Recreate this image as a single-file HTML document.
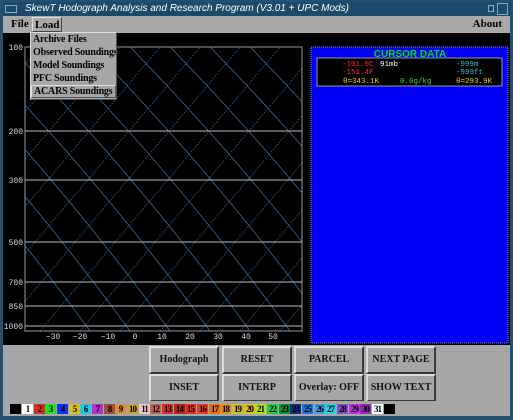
<!DOCTYPE html>
<html><head><style>
*{margin:0;padding:0;box-sizing:border-box}
body{width:513px;height:420px;background:#23506e;position:relative;overflow:hidden;font-family:"Liberation Serif",serif}
.abs{position:absolute}
#title{left:3px;top:2px;width:507px;height:14px;background:#1d4a6b;color:#fff;font:italic 10px "Liberation Sans",sans-serif;line-height:14px;white-space:nowrap}
#menubar{left:3px;top:16px;width:507px;height:17px;background:#a9a9a9;font:bold 11px "Liberation Serif",serif;line-height:17px}
#main{left:3px;top:33px;width:507px;height:312px;background:#000}
#menu{left:30px;top:32px;width:87px;height:68px;background:#a6a6a6;border:1px solid #ddd;border-right-color:#555;border-bottom-color:#555;font:bold 10px "Liberation Serif",serif;white-space:nowrap;overflow:hidden;letter-spacing:-0.2px}
#menu div{height:13px;line-height:13px;padding-left:2px}
#bottom{left:3px;top:345px;width:507px;height:56px;background:#a6a6a6}
.btn{position:absolute;width:70px;height:28px;background:#a6a6a6;border:2px solid;border-color:#dcdcdc #3a3a3a #3a3a3a #dcdcdc;font:bold 10px "Liberation Serif",serif;text-align:center;line-height:24px;color:#111;white-space:nowrap}
#cbar{left:3px;top:401px;width:507px;height:15px;background:#a6a6a6}
.sw{position:absolute;top:3px;width:11px;height:10px;font:bold 9px "Liberation Serif",serif;line-height:10px;text-align:center;color:#000;letter-spacing:-1px}
</style></head><body>
<div class="abs" id="title"><span style="position:absolute;left:2px;top:3px;width:12px;height:8px;border:1px solid #8ab"></span><span style="position:absolute;left:22px">SkewT Hodograph Analysis and Research Program (V3.01 + UPC Mods)</span><span style="position:absolute;right:16px;top:3px;width:6px;height:7px;border:1px solid #8ab"></span><span style="position:absolute;right:2px;top:1px;width:11px;height:12px;border:1px solid #8ab"></span></div>
<div class="abs" id="menubar"><span style="position:absolute;left:8px">File</span><span style="position:absolute;left:29px;top:1px;height:15px;line-height:14px;padding:0 2px;border:1px solid #ddd;border-right-color:#444;border-bottom-color:#444">Load</span><span style="position:absolute;right:8px">About</span></div>
<div class="abs" id="main"></div>
<svg class="abs" style="left:0;top:0" width="513" height="345">
<defs><clipPath id="c"><rect x="25" y="47" width="277" height="284"/></clipPath></defs>
<g clip-path="url(#c)" stroke="#2e6fa0" stroke-width="0.8" fill="none">
<g stroke-dasharray="1.5,1.5">
<path d="M-200,331 L40,47 M-160,331 L80,47 M-120,331 L120,47 M-80,331 L160,47 M-40,331 L200,47 M0,331 L240,47 M40,331 L280,47 M80,331 L320,47 M120,331 L360,47 M160,331 L400,47 M200,331 L440,47 M240,331 L480,47 M280,331 L520,47"/>
</g>
<path d="M-150,47 Q-20,180 90,331 M-110,47 Q20,180 130,331 M-70,47 Q60,180 170,331 M-30,47 Q100,180 210,331 M10,47 Q140,180 250,331 M50,47 Q180,180 290,331 M90,47 Q220,180 330,331 M130,47 Q260,180 370,331 M170,47 Q300,180 410,331 M210,47 Q340,180 450,331 M250,47 Q380,180 490,331"/>
</g>
<rect x="25" y="47" width="277" height="284" fill="none" stroke="#999" stroke-width="1"/>
<g stroke="#bbb" stroke-width="1"><path d="M25,131H302M25,180H302M25,242H302M25,282H302M25,306H302M25,326H302"/></g>
<g fill="#ddd" font-family="Liberation Mono,monospace" font-size="8" text-anchor="end">
<text x="23" y="50">100</text><text x="23" y="134">200</text><text x="23" y="183">300</text><text x="23" y="245">500</text><text x="23" y="285">700</text><text x="23" y="309">850</text><text x="23" y="329">1000</text>
</g>
<g fill="#ddd" font-family="Liberation Mono,monospace" font-size="8" text-anchor="middle">
<text x="53" y="339">−30</text><text x="80" y="339">−20</text><text x="108" y="339">−10</text><text x="135" y="339">0</text><text x="162" y="339">10</text><text x="190" y="339">20</text><text x="218" y="339">30</text><text x="246" y="339">40</text><text x="273" y="339">50</text>
</g>
<rect x="311" y="47" width="197" height="296" fill="#0000f8" stroke="#88a" stroke-dasharray="1,1"/>
<text x="410" y="57" fill="#00e000" font-family="Liberation Sans,sans-serif" font-size="10" font-weight="bold" text-anchor="middle">CURSOR DATA</text>
<rect x="317" y="58" width="185" height="28" fill="#000" stroke="#999"/>
<g font-family="Liberation Mono,monospace" font-size="7.5">
<text x="342" y="66" fill="#ff3030">-101.9C</text><text x="380" y="66" fill="#fff">91mb</text><text x="456" y="66" fill="#30c0d0">-999m</text>
<text x="342" y="74" fill="#ff3030">-151.4F</text><text x="456" y="74" fill="#30c0d0">-999ft</text>
<text x="343" y="83" fill="#e0d020">θ=343.1K</text><text x="400" y="83" fill="#40e040">0.0g/kg</text><text x="456" y="83" fill="#e0d020">θ=293.9K</text>
</g>
</svg>
<div class="abs" id="menu"><div>Archive Files</div><div>Observed Soundings</div><div>Model Soundings</div><div>PFC Soundings</div><div style="border:1px solid #ddd;border-right-color:#555;border-bottom-color:#555;line-height:11px">ACARS Soundings</div></div>
<div class="abs" id="bottom">
<div class="btn" style="left:146px;top:1px">Hodograph</div>
<div class="btn" style="left:219px;top:1px">RESET</div>
<div class="btn" style="left:291px;top:1px">PARCEL</div>
<div class="btn" style="left:363px;top:1px">NEXT PAGE</div>
<div class="btn" style="left:146px;top:29px">INSET</div>
<div class="btn" style="left:219px;top:29px">INTERP</div>
<div class="btn" style="left:291px;top:29px">Overlay: OFF</div>
<div class="btn" style="left:363px;top:29px">SHOW TEXT</div>
</div>
<div class="abs" id="cbar">
<div class="sw" style="left:7px;background:#000"></div>
<div class="sw" style="left:19px;background:#fff">1</div>
<div class="sw" style="left:31px;background:#d03020">2</div>
<div class="sw" style="left:42px;background:#20e020">3</div>
<div class="sw" style="left:54px;background:#1030f0">4</div>
<div class="sw" style="left:66px;background:#d8c020">5</div>
<div class="sw" style="left:77px;background:#20c8e0">6</div>
<div class="sw" style="left:89px;background:#b030d0">7</div>
<div class="sw" style="left:101px;background:#a05030">8</div>
<div class="sw" style="left:112px;background:#d89040">9</div>
<div class="sw" style="left:124px;background:#d0a030">10</div>
<div class="sw" style="left:136px;background:#e8c8c8">11</div>
<div class="sw" style="left:147px;background:#c06050">12</div>
<div class="sw" style="left:159px;background:#d83020">13</div>
<div class="sw" style="left:171px;background:#b02818">14</div>
<div class="sw" style="left:182px;background:#e03020">15</div>
<div class="sw" style="left:194px;background:#e04028">16</div>
<div class="sw" style="left:206px;background:#e07020">17</div>
<div class="sw" style="left:217px;background:#e09020">18</div>
<div class="sw" style="left:229px;background:#d0c030">19</div>
<div class="sw" style="left:241px;background:#e0c020">20</div>
<div class="sw" style="left:252px;background:#b0e020">21</div>
<div class="sw" style="left:264px;background:#20d040">22</div>
<div class="sw" style="left:276px;background:#109030">23</div>
<div class="sw" style="left:287px;background:#103080">24</div>
<div class="sw" style="left:299px;background:#2070e0">25</div>
<div class="sw" style="left:311px;background:#40a0e0">26</div>
<div class="sw" style="left:322px;background:#30d0e0">27</div>
<div class="sw" style="left:334px;background:#8050d0">28</div>
<div class="sw" style="left:346px;background:#c030e0">29</div>
<div class="sw" style="left:357px;background:#9030b0">30</div>
<div class="sw" style="left:369px;background:#fff">31</div>
<div class="sw" style="left:381px;background:#000"></div>
</div>
</body></html>
